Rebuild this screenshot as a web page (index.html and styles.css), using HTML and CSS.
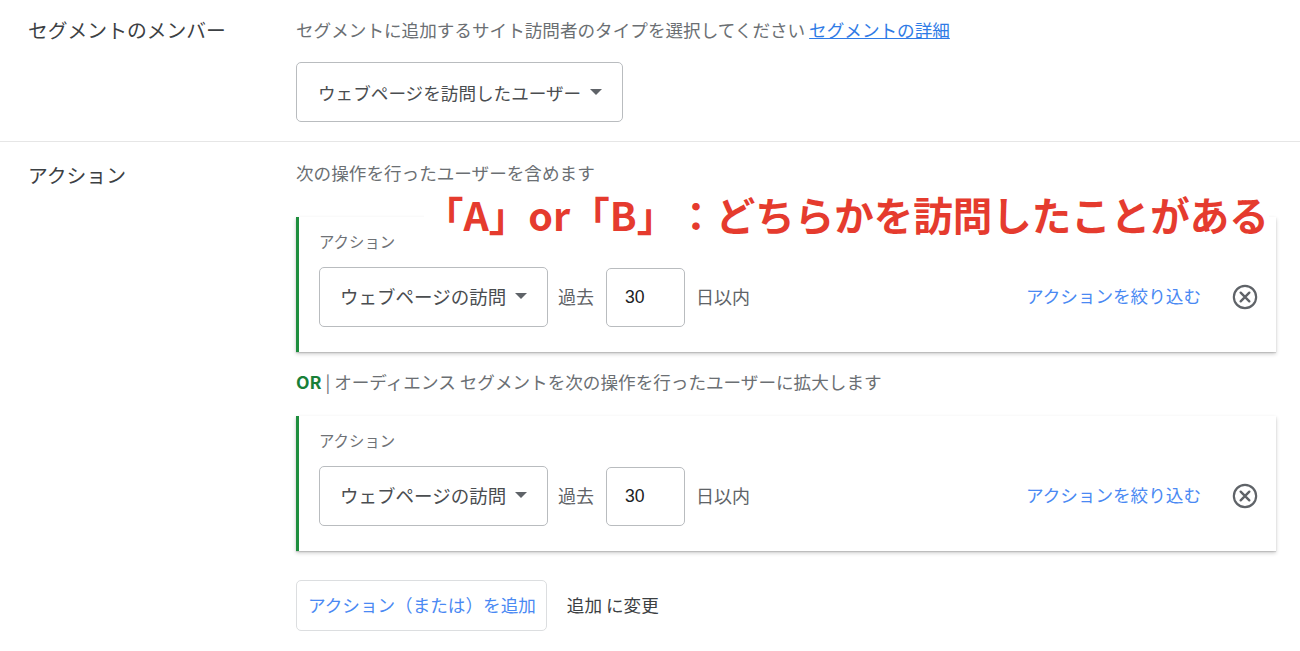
FILE: index.html
```html
<!DOCTYPE html>
<html lang="ja">
<head>
<meta charset="utf-8">
<title>セグメント</title>
<link rel="stylesheet" href="styles.css">
</head>
<body>
<div class="page">
  <section class="row row-members">
    <div class="label">セグメントのメンバー</div>
    <div class="body">
      <p class="desc">セグメントに追加するサイト訪問者のタイプを選択してください <a class="link" href="#">セグメントの詳細</a></p>
      <div class="select select-main">
        <span>ウェブページを訪問したユーザー</span>
        <span class="caret"></span>
      </div>
    </div>
  </section>
  <section class="row row-actions">
    <div class="label">アクション</div>
    <div class="body">
      <p class="desc">次の操作を行ったユーザーを含めます</p>
      <div class="card">
        <div class="card-label">アクション</div>
        <div class="controls">
          <div class="select select-card">
            <span>ウェブページの訪問</span>
            <span class="caret"></span>
          </div>
          <span class="muted">過去</span>
          <div class="num">30</div>
          <span class="muted">日以内</span>
          <a class="refine" href="#">アクションを絞り込む</a>
          <svg class="close" viewBox="0 0 24 24" width="26" height="26" aria-hidden="true">
            <circle cx="12" cy="12" r="10.3" fill="none" stroke="#5f6368" stroke-width="2"/>
            <path d="M8 8 L16 16 M16 8 L8 16" stroke="#5f6368" stroke-width="2.2" stroke-linecap="round"/>
          </svg>
        </div>
      </div>
      <p class="or-line"><b class="or">OR</b> | オーディエンス セグメントを次の操作を行ったユーザーに拡大します</p>
      <div class="card">
        <div class="card-label">アクション</div>
        <div class="controls">
          <div class="select select-card">
            <span>ウェブページの訪問</span>
            <span class="caret"></span>
          </div>
          <span class="muted">過去</span>
          <div class="num">30</div>
          <span class="muted">日以内</span>
          <a class="refine" href="#">アクションを絞り込む</a>
          <svg class="close" viewBox="0 0 24 24" width="26" height="26" aria-hidden="true">
            <circle cx="12" cy="12" r="10.3" fill="none" stroke="#5f6368" stroke-width="2"/>
            <path d="M8 8 L16 16 M16 8 L8 16" stroke="#5f6368" stroke-width="2.2" stroke-linecap="round"/>
          </svg>
        </div>
      </div>
      <div class="footer">
        <button class="add-btn" type="button">アクション（または）を追加</button>
        <span class="change">追加 に変更</span>
      </div>
    </div>
  </section>
  <div class="annotation">「A」or「B」：どちらかを訪問したことがある</div>
</div>
</body>
</html>
```
FILE: styles.css
```css
* { box-sizing: border-box; }
html, body { margin: 0; padding: 0; background: #fff; }
body {
  font-family: "Noto Sans CJK JP", "Noto Sans", sans-serif;
  color: #3c4043;
  width: 1300px;
  height: 651px;
  overflow: hidden;
}
.page { position: relative; }
.row {
  display: grid;
  grid-template-columns: 296px 1fr;
}
.row-members {
  padding: 17px 0 19px;
  border-bottom: 1px solid #e6e6e6;
}
.row-actions { padding: 18px 0 0; }
.label {
  padding-left: 28px;
  font-size: 19.8px;
  line-height: 26px;
  color: #3c4043;
}
.row-actions .label { padding-top: 2px; }
.body { padding-right: 24px; }
.desc {
  margin: 0;
  font-size: 17.6px;
  line-height: 26px;
  color: #6b6f73;
}
.link { color: #2f7be6; text-decoration: underline; }
.select {
  display: flex;
  align-items: center;
  height: 60px;
  border: 1px solid #b9bcbf;
  border-radius: 5px;
  color: #4a4d50;
  background: #fff;
}
.select-main {
  margin-top: 19px;
  width: 327px;
  padding: 0 20px 0 21px;
  font-size: 17.6px;
  justify-content: space-between;
}
.caret {
  width: 0; height: 0;
  border-left: 6px solid transparent;
  border-right: 6px solid transparent;
  border-top: 6px solid #5f6368;
}
.card {
  margin-top: 31px;
  width: 980px;
  background: #fff;
  border-left: 3px solid #1e8e3e;
  box-shadow: 0 1px 1px rgba(0,0,0,0.12), 0 2px 4px rgba(0,0,0,0.2);
  padding: 14px 18px 25px 20px;
}
.card-label {
  font-size: 15.4px;
  line-height: 20px;
  color: #6f7276;
}
.controls {
  margin-top: 16px;
  display: flex;
  align-items: center;
  line-height: 24px;
}
.select-card {
  width: 229px;
  padding: 0 20px 2px 20px;
  font-size: 18.5px;
  justify-content: space-between;
}
.muted {
  font-size: 18px;
  color: #606367;
  padding-bottom: 3px;
}
.controls .muted:first-of-type { margin-left: 10px; }
.num {
  margin-left: 12px;
  width: 79px;
  height: 59px;
  border: 1px solid #b9bcbf;
  border-radius: 5px;
  display: flex;
  align-items: center;
  padding-left: 18px;
  font-family: "Liberation Sans", Arial, sans-serif;
  font-size: 17.6px;
  color: #202124;
}
.num + .muted { margin-left: 11px; }
.refine {
  margin-left: auto;
  font-size: 17.6px;
  color: #4a89f3;
  text-decoration: none;
  padding-bottom: 3px;
}
.close { margin-left: 31px; flex: none; }
.or-line {
  margin: 17px 0 0;
  font-size: 17.6px;
  line-height: 26px;
  color: #6b6f73;
}
.or-line + .card { margin-top: 21px; }
.or { color: #188038; font-weight: 700; }
.footer {
  margin-top: 29px;
  display: flex;
  align-items: center;
}
.add-btn {
  height: 51px;
  padding: 0 10px 3px 11px;
  border: 1px solid #dcdee0;
  border-radius: 5px;
  background: #fff;
  font-family: inherit;
  font-size: 17.6px;
  color: #4a89f3;
}
.change {
  margin-left: 20px;
  font-size: 17.6px;
  color: #3c4043;
  padding-bottom: 3px;
}
.annotation {
  position: absolute;
  left: 424px;
  top: 191px;
  padding: 0;
  background: #fff;
  color: #e53b2e;
  font-weight: 700;
  font-size: 39.5px;
  line-height: 46px;
  letter-spacing: 0;
  white-space: nowrap;
  text-spacing-trim: space-all;
}
```
